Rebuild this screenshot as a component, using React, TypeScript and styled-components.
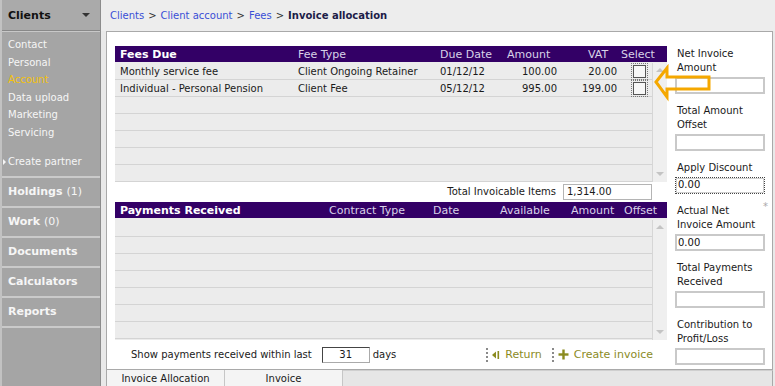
import React from 'react';
import styled, { createGlobalStyle } from 'styled-components';

const GlobalStyle = createGlobalStyle`
  body {
    margin: 0;
    background: #e9e9e9;
    font-family: "DejaVu Sans", Verdana, sans-serif;
  }
`;

const Page = styled.div`
  display: flex;
  width: 775px;
  height: 386px;
  overflow: hidden;
  background: #e9e9e9;
  font-family: "DejaVu Sans", Verdana, sans-serif;
`;

const Sidebar = styled.nav`
  width: 98px;
  display: flex;
  flex-direction: column;
  background: #a5a5a5;
  border-left: 2px solid #c2c2c2;
  border-right: 1px solid #8c8c8c;
`;

const SideHeader = styled.div`
  height: 30px;
  display: flex;
  align-items: center;
  justify-content: space-between;
  padding: 0 10px 0 6px;
  font-size: 11px;
  font-weight: bold;
  color: #111;
  background: #aaaaaa;
  border-bottom: 1px solid #888;
`;

const Caret = styled.span`
  width: 0;
  height: 0;
  border-left: 4px solid transparent;
  border-right: 4px solid transparent;
  border-top: 4px solid #333;
`;

const SubMenu = styled.ul`
  list-style: none;
  margin: 0;
  padding: 4px 0 5px 6px;
  border-top: 1px solid #c8c8c8;
  border-bottom: 2px solid #cacaca;
`;

const SubItem = styled.li<{ $active?: boolean; $gap?: boolean }>`
  position: relative;
  font-size: 10px;
  line-height: 17.5px;
  color: ${(p) => (p.$active ? '#f4c20d' : '#f6f6f6')};
  margin-top: ${(p) => (p.$gap ? '12px' : '0')};
`;

const SubArrow = styled.span`
  position: absolute;
  left: -5px;
  top: 6px;
  border-top: 3px solid transparent;
  border-bottom: 3px solid transparent;
  border-left: 3px solid #f6f6f6;
`;

const SideItem = styled.div`
  height: 28px;
  display: flex;
  align-items: center;
  padding-left: 6px;
  font-size: 11px;
  font-weight: bold;
  color: #f6f6f6;
  border-bottom: 2px solid #cacaca;
`;

const Count = styled.span`
  font-weight: normal;
  margin-left: 4px;
`;

const Main = styled.main`
  flex: 1;
  display: flex;
  flex-direction: column;
`;

const Crumbs = styled.div`
  height: 31px;
  display: flex;
  align-items: center;
  padding-left: 9px;
  font-size: 10px;
  color: #333;
  background: #ededed;
`;

const Crumb = styled.span`
  color: #3a4fd6;
`;

const Sep = styled.span`
  margin: 0 4px;
`;

const Current = styled.span`
  font-weight: bold;
  color: #1c1c48;
`;

const Panel = styled.section`
  position: relative;
  margin-left: 5px;
  width: 667px;
  height: 339px;
  box-sizing: border-box;
  border: 1px solid #a9a9a9;
  background: #fff;
  display: flex;
  padding: 14px 0 0 8px;
`;

const LeftCol = styled.div`
  width: 552px;
  display: flex;
  flex-direction: column;
`;

const HeadRow = styled.div<{ $cols: string }>`
  height: 16px;
  display: grid;
  grid-template-columns: ${(p) => p.$cols};
  align-items: center;
  background: #330066;
  color: #d8d2e8;
  font-size: 11px;
`;

const HeadCell = styled.span<{ $pl?: number; $bold?: boolean }>`
  padding-left: ${(p) => p.$pl ?? 5}px;
  font-weight: ${(p) => (p.$bold ? 'bold' : 'normal')};
  color: ${(p) => (p.$bold ? '#fff' : 'inherit')};
  white-space: nowrap;
`;

const Body = styled.div<{ $h: number; $pt: number }>`
  height: ${(p) => p.$h}px;
  box-sizing: border-box;
  padding-top: ${(p) => p.$pt}px;
  display: flex;
  background: #ececec;
  overflow: hidden;
`;

const Rows = styled.div`
  width: 537px;
`;

const Row = styled.div<{ $cols: string }>`
  height: 17px;
  box-sizing: border-box;
  display: grid;
  grid-template-columns: ${(p) => p.$cols};
  align-items: center;
  border-bottom: 1px solid #d4d4d4;
  font-size: 10px;
  color: #1a1a1a;
`;

const Cell = styled.span<{ $right?: boolean; $pr?: number }>`
  padding-left: 5px;
  padding-right: ${(p) => p.$pr ?? 0}px;
  text-align: ${(p) => (p.$right ? 'right' : 'left')};
  white-space: nowrap;
`;

const Check = styled.span`
  margin-left: 14px;
  display: block;
  width: 11px;
  height: 11px;
  border: 1px solid #555;
  background: #f7f7f7;
  outline: 1px dotted #777;
  outline-offset: 1px;
`;

const Scroll = styled.div`
  width: 15px;
  box-sizing: border-box;
  border-left: 1px solid #d6d6d6;
  background: #efefef;
  display: flex;
  flex-direction: column;
  justify-content: space-between;
  align-items: center;
  padding: 5px 0 6px;
`;

const ArrowUp = styled.span`
  border-left: 4px solid transparent;
  border-right: 4px solid transparent;
  border-bottom: 4px solid #c4c4c4;
`;

const ArrowDown = styled.span`
  border-left: 4px solid transparent;
  border-right: 4px solid transparent;
  border-top: 4px solid #c4c4c4;
`;

const TotalRow = styled.div`
  margin-top: 1px;
  height: 17px;
  display: flex;
  align-items: center;
  justify-content: flex-end;
  gap: 7px;
  padding-right: 15px;
  font-size: 10px;
  color: #1a1a1a;
`;

const TotalBox = styled.div`
  width: 89px;
  height: 16px;
  box-sizing: border-box;
  border: 1px solid #b4b4b4;
  padding-left: 3px;
  line-height: 14px;
`;

const Spacer = styled.div<{ $h: number }>`
  height: ${(p) => p.$h}px;
`;

const Footer = styled.div`
  height: 29px;
  display: flex;
  align-items: center;
  padding-left: 16px;
  padding-right: 14px;
  font-size: 10px;
  color: #1a1a1a;
`;

const DaysBox = styled.div`
  width: 48px;
  height: 16px;
  box-sizing: border-box;
  margin: 0 3px 0 10px;
  border: 1px solid #444;
  border-right-color: #aaa;
  border-bottom-color: #aaa;
  text-align: center;
  line-height: 14px;
`;

const Actions = styled.div`
  margin-left: auto;
  display: flex;
  align-items: center;
  font-size: 11px;
  color: #8b8b1f;
`;

const Dots = styled.span`
  height: 14px;
  border-left: 2px dotted #8a8a8a;
  margin-right: 4px;
`;

const Action = styled.span`
  display: flex;
  align-items: center;
  gap: 5px;
  margin-right: 10px;
  &:last-child {
    margin-right: 0;
  }
`;

const RightCol = styled.aside`
  flex: 1;
  padding-left: 8px;
  display: flex;
  flex-direction: column;
  gap: 10px;
  padding-top: 1px;
`;

const Field = styled.div`
  position: relative;
  width: 90px;
`;

const Label = styled.div`
  padding-left: 2px;
  font-size: 10px;
  line-height: 14px;
  color: #1a1a1a;
`;

const Star = styled.span`
  position: absolute;
  right: -3px;
  top: -3px;
  font-size: 10px;
  color: #aaa;
`;

const Input = styled.div<{ $focus?: boolean }>`
  margin-top: 2px;
  height: 17px;
  box-sizing: border-box;
  border: ${(p) => (p.$focus ? '1px dotted #444' : '2px solid #c9c9c9')};
  box-shadow: ${(p) => (p.$focus ? 'inset 0 0 0 1px #cfcfcf' : 'none')};
  padding-left: ${(p) => (p.$focus ? 2 : 1)}px;
  font-size: 10px;
  line-height: 14px;
  color: #111;
  background: #fff;
`;

const Pointer = styled.svg`
  position: absolute;
  left: 543px;
  top: 32px;
`;

const Tabs = styled.div`
  margin-left: 5px;
  width: 667px;
  height: 16px;
  display: flex;
  font-size: 10px;
  color: #1a1a1a;
`;

const Tab = styled.div<{ $w: number }>`
  width: ${(p) => p.$w}px;
  box-sizing: border-box;
  display: flex;
  align-items: center;
  justify-content: center;
  background: #f4f4f4;
  border-right: 1px solid #c6c6c6;
  &:first-child {
    border-left: 1px solid #a9a9a9;
  }
`;

const TabRest = styled.div`
  flex: 1;
  background: #e6e6e6;
  border-top: 1px solid #cfcfcf;
  border-right: 1px solid #a9a9a9;
`;

const feeHead = '178px 142px 67px 60px 57px 48px';
const feeBody = '178px 142px 67px 60px 57px 33px';
const payHead = '209px 104px 67px 71px 53px 48px';

const fees = [
  { name: 'Monthly service fee', type: 'Client Ongoing Retainer', due: '01/12/12', amount: '100.00', vat: '20.00' },
  { name: 'Individual - Personal Pension', type: 'Client Fee', due: '05/12/12', amount: '995.00', vat: '199.00' },
];

const fields = [
  { label: ['Net Invoice', 'Amount'], value: '' },
  { label: ['Total Amount', 'Offset'], value: '' },
  { label: ['Apply Discount'], value: '0.00', focus: true },
  { label: ['Actual Net', 'Invoice Amount'], value: '0.00', star: true },
  { label: ['Total Payments', 'Received'], value: '' },
  { label: ['Contribution to', 'Profit/Loss'], value: '' },
];

const subItems = ['Contact', 'Personal', 'Account', 'Data upload', 'Marketing', 'Servicing'];

const App: React.FC = () => {
  const emptyFees = Array.from({ length: 5 });
  const emptyPays = Array.from({ length: 7 });

  return (
    <Page>
      <GlobalStyle />
      <Sidebar>
        <SideHeader>
          Clients
          <Caret />
        </SideHeader>
        <SubMenu>
          {subItems.map((item) => (
            <SubItem key={item} $active={item === 'Account'}>
              {item}
            </SubItem>
          ))}
          <SubItem $gap>
            <SubArrow />
            Create partner
          </SubItem>
        </SubMenu>
        <SideItem>
          Holdings<Count>(1)</Count>
        </SideItem>
        <SideItem>
          Work<Count>(0)</Count>
        </SideItem>
        <SideItem>Documents</SideItem>
        <SideItem>Calculators</SideItem>
        <SideItem>Reports</SideItem>
      </Sidebar>

      <Main>
        <Crumbs>
          <Crumb>Clients</Crumb>
          <Sep>&gt;</Sep>
          <Crumb>Client account</Crumb>
          <Sep>&gt;</Sep>
          <Crumb>Fees</Crumb>
          <Sep>&gt;</Sep>
          <Current>Invoice allocation</Current>
        </Crumbs>

        <Panel>
          <LeftCol>
            <HeadRow $cols={feeHead}>
              <HeadCell $bold>Fees Due</HeadCell>
              <HeadCell>Fee Type</HeadCell>
              <HeadCell>Due Date</HeadCell>
              <HeadCell>Amount</HeadCell>
              <HeadCell $pl={26}>VAT</HeadCell>
              <HeadCell $pl={2}>Select</HeadCell>
            </HeadRow>
            <Body $h={120} $pt={1}>
              <Rows>
                {fees.map((f) => (
                  <Row key={f.name} $cols={feeBody}>
                    <Cell>{f.name}</Cell>
                    <Cell>{f.type}</Cell>
                    <Cell>{f.due}</Cell>
                    <Cell $right $pr={5}>{f.amount}</Cell>
                    <Cell $right $pr={2}>{f.vat}</Cell>
                    <Check />
                  </Row>
                ))}
                {emptyFees.map((_, i) => (
                  <Row key={`fee-empty-${i}`} $cols={feeBody} />
                ))}
              </Rows>
              <Scroll>
                <ArrowUp />
                <ArrowDown />
              </Scroll>
            </Body>

            <TotalRow>
              Total Invoicable Items
              <TotalBox>1,314.00</TotalBox>
            </TotalRow>
            <Spacer $h={2} />

            <HeadRow $cols={payHead}>
              <HeadCell $bold>Payments Received</HeadCell>
              <HeadCell>Contract Type</HeadCell>
              <HeadCell>Date</HeadCell>
              <HeadCell>Available</HeadCell>
              <HeadCell>Amount</HeadCell>
              <HeadCell>Offset</HeadCell>
            </HeadRow>
            <Body $h={122} $pt={2}>
              <Rows>
                {emptyPays.map((_, i) => (
                  <Row key={`pay-empty-${i}`} $cols={feeBody} />
                ))}
              </Rows>
              <Scroll>
                <ArrowUp />
                <ArrowDown />
              </Scroll>
            </Body>

            <Footer>
              Show payments received within last
              <DaysBox>31</DaysBox>
              days
              <Actions>
                <Dots />
                <Action>
                  <svg width="8" height="10" viewBox="0 0 8 10">
                    <path d="M0 5 L4 1.5 L4 8.5 Z" fill="#8b8b1f" />
                    <rect x="5.5" y="1" width="1.6" height="8" fill="#8b8b1f" />
                  </svg>
                  Return
                </Action>
                <Dots />
                <Action>
                  <svg width="11" height="11" viewBox="0 0 11 11">
                    <rect x="4.3" y="0.5" width="2.4" height="10" fill="#8b8b1f" />
                    <rect x="0.5" y="4.3" width="10" height="2.4" fill="#8b8b1f" />
                  </svg>
                  Create invoice
                </Action>
              </Actions>
            </Footer>
          </LeftCol>

          <RightCol>
            {fields.map((f) => (
              <Field key={f.label.join(' ')}>
                <Label>
                  {f.label.map((line) => (
                    <div key={line}>{line}</div>
                  ))}
                </Label>
                {f.star && <Star>*</Star>}
                <Input $focus={f.focus}>{f.value}</Input>
              </Field>
            ))}
          </RightCol>

          <Pointer width="64" height="38" viewBox="0 0 64 38">
            <path
              d="M6 18 L17 4 L17 13 L59 13 L59 25 L17 25 L17 33 Z"
              fill="none"
              stroke="#f5a800"
              strokeWidth="3"
              strokeLinejoin="miter"
            />
          </Pointer>
        </Panel>

        <Tabs>
          <Tab $w={119}>Invoice Allocation</Tab>
          <Tab $w={118}>Invoice</Tab>
          <TabRest />
        </Tabs>
      </Main>
    </Page>
  );
};

export default App;
